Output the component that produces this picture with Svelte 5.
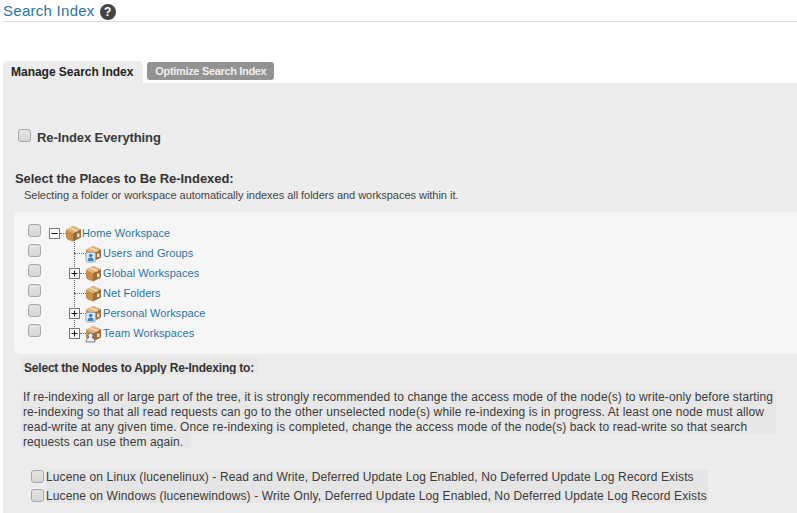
<script>
  const rows = [
    { label: 'Home Workspace', toggle: 'minus', depth: 0, badge: '' },
    { label: 'Users and Groups', toggle: '', depth: 1, badge: 'user' },
    { label: 'Global Workspaces', toggle: 'plus', depth: 1, badge: '' },
    { label: 'Net Folders', toggle: '', depth: 1, badge: '' },
    { label: 'Personal Workspace', toggle: 'plus', depth: 1, badge: 'user' },
    { label: 'Team Workspaces', toggle: 'plus', depth: 1, badge: 'team' }
  ];
  const nodes = [
    'Lucene on Linux (lucenelinux) - Read and Write, Deferred Update Log Enabled, No Deferred Update Log Record Exists',
    'Lucene on Windows (lucenewindows) - Write Only, Deferred Update Log Enabled, No Deferred Update Log Record Exists'
  ];
</script>

<div class="page">
  <header class="title">
    <span>Search Index</span>
    <span class="help">?</span>
  </header>

  <nav class="tabs">
    <span class="tab active">Manage Search Index</span>
    <span class="tab">Optimize Search Index</span>
  </nav>

  <main class="panel">
    <label class="everything"><input type="checkbox" /><span>Re-Index Everything</span></label>

    <h2>Select the Places to Be Re-Indexed:</h2>
    <p class="hint">Selecting a folder or workspace automatically indexes all folders and workspaces within it.</p>

    <section class="tree">
      <div class="checks">
        {#each rows as r}<input type="checkbox" aria-label={r.label} />{/each}
      </div>
      <div class="rows">
        {#each rows as r}
          <div class="row" class:child={r.depth === 1}>
            {#if r.depth === 1}
              <i class="vline"></i>
            {/if}
            {#if r.toggle}
              <svg class="toggle" width="11" height="11" viewBox="0 0 11 11">
                <rect x=".5" y=".5" width="10" height="10" fill="#fff" stroke="#777" />
                <path d="M2.500 5.500h6" stroke="#111" />
                {#if r.toggle === 'plus'}<path d="M5.500 2.500v6" stroke="#111" />{/if}
              </svg>
              <i class="dots short"></i>
            {:else}
              <i class="dots long"></i>
            {/if}
            <svg class="box" width="20" height="20" viewBox="0 0 20 20">
              <path d="M3 6.500 10 10V18.500L4.500 16.500 3 14.500Z" fill="#c98d4a" />
              <path d="M10 10 18 6V14.500L10 18.500Z" fill="#9f6d39" />
              <path d="M3 6.500 10 2.800 18 6 10 10Z" fill="#e0b27a" />
              <path d="M6.500 4.600 14.500 8" stroke="#f3dcb6" stroke-width="1.500" />
              <rect x="14" y="10.500" width="2.500" height="3.500" fill="#e8dcc8" />
              {#if r.badge === 'user'}
                <rect x="3" y="9.500" width="9.500" height="9.500" rx="1.500" fill="#dfe7f0" stroke="#9aa9ba" />
                <circle cx="7.700" cy="12.500" r="1.800" fill="#2f87d0" />
                <path d="M4.600 18c0-2.800 1.300-3.400 3.100-3.400s3.100.6 3.100 3.400Z" fill="#2f87d0" />
              {:else if r.badge === 'team'}
                <path d="M3 19c.2-3 1.500-4.200 3-4.600a2.400 2.400 0 1 1 3 0c1.500.4 2.800 1.600 3 4.600Z" fill="#e8edf2" stroke="#667" stroke-width=".8" />
              {/if}
            </svg>
            <span class="label">{r.label}</span>
          </div>
        {/each}
      </div>
    </section>

    <section class="nodes">
      <div class="nodes-clip"><h3>Select the Nodes to Apply Re-Indexing to:</h3></div>
      <p class="note">If re-indexing all or large part of the tree, it is strongly recommended to change the access mode of the node(s) to write-only before starting re-indexing so that all read requests can go to the other unselected node(s) while re-indexing is in progress. At least one node must allow read-write at any given time. Once re-indexing is completed, change the access mode of the node(s) back to read-write so that search requests can use them again.</p>
      <div class="node-list">
        {#each nodes as n}
          <label class="node"><input type="checkbox" /><span>{n}</span></label>
        {/each}
      </div>
    </section>
  </main>
</div>

<style>
  :global(body) { margin: 0; background: #fff; }
  .page {
    width: 797px;
    height: 513px;
    overflow: hidden;
    font-family: "Liberation Sans", Arial, sans-serif;
    font-size: 12px;
    color: #333;
    box-sizing: border-box;
    padding-left: 3px;
  }
  .title {
    display: flex;
    align-items: center;
    gap: 5px;
    height: 21px;
    border-bottom: 1px solid #ddd;
    font-size: 15px;
    letter-spacing: .27px;
    color: #2b75a5;
  }
  .help {
    width: 16px;
    height: 16px;
    border-radius: 50%;
    background: #444;
    color: #fff;
    font-size: 12px;
    font-weight: 700;
    letter-spacing: 0;
    line-height: 16px;
    text-align: center;
    margin-top: 2px;
  }
  .tabs {
    display: flex;
    align-items: flex-end;
    gap: 4px;
    height: 22px;
    margin-top: 39px;
  }
  .tab {
    display: flex;
    align-items: center;
    height: 18px;
    margin-bottom: 3px;
    padding: 0 8px;
    background: #939393;
    color: #eee;
    border-radius: 3px;
    font-size: 11px;
    font-weight: 700;
    letter-spacing: -.33px;
  }
  .tab.active {
    height: 22px;
    margin-bottom: 0;
    padding-right: 10px;
    background: #ececec;
    color: #222;
    border-radius: 4px 4px 0 0;
    font-size: 12px;
    letter-spacing: -.02px;
  }
  .panel {
    background: #ececec;
    height: 430px;
    padding-top: 45px;
    box-sizing: border-box;
  }
  input[type="checkbox"] {
    appearance: none;
    display: block;
    flex: none;
    width: 11px;
    height: 11px;
    margin: 0;
    background: linear-gradient(#e4e4e4, #d6d6d6);
    border: 1px solid #a8a8a8;
    border-radius: 3px;
    box-sizing: content-box;
  }
  .everything {
    display: flex;
    align-items: center;
    gap: 6px;
    margin-left: 15px;
    font-size: 13px;
    font-weight: 700;
    letter-spacing: -.1px;
    color: #3a3a3a;
    height: 18px;
  }
  .everything input { margin-bottom: 3px; }
  h2 {
    margin: 25px 0 0 12px;
    font-size: 13px;
    line-height: 16px;
    letter-spacing: -.05px;
    color: #333;
  }
  .hint {
    margin: 2px 0 0 21px;
    font-size: 11px;
    line-height: 13px;
    letter-spacing: -.03px;
    color: #444;
  }
  .tree {
    display: flex;
    margin: 10px 0 0 11px;
    height: 142px;
    background: #f6f6f6;
    border-radius: 5px 0 0 5px;
    box-sizing: border-box;
    padding-top: 12px;
  }
  .checks {
    display: flex;
    flex-direction: column;
    gap: 7px;
    margin-left: 14px;
    width: 19px;
  }
  .rows { margin: -1px 0 0 -1px; }
  .row {
    position: relative;
    display: flex;
    align-items: center;
    height: 20px;
    font-size: 11px;
    letter-spacing: .07px;
    color: #2b75a5;
  }
  .row .toggle { margin-left: 3px; flex: none; }
  .row.child .toggle { margin-left: 23px; position: relative; z-index: 1; }
  .dots { display: block; height: 0; border-top: 1px dotted #666; flex: none; }
  .dots.short { width: 6px; }
  .dots.long { width: 12px; margin-left: 28px; }
  .vline {
    position: absolute;
    left: 28px;
    top: -10px;
    height: 20px;
    border-left: 1px dotted #666;
  }
  .box { flex: none; margin-left: -3px; }
  .label { white-space: nowrap; }
  .row:not(.child) .label { margin-left: -1px; }
  .nodes { padding-left: 18px; }
  .nodes-clip {
    width: fit-content;
    height: 16px;
    margin-top: 4px;
    overflow: hidden;
    background: #e7e7e7;
  }
  h3 {
    margin: 0;
    padding: 3px 4px 0 3px;
    font-size: 12px;
    line-height: 15px;
    letter-spacing: -.2px;
    color: #333;
  }
  .note {
    margin: 16px 0 0;
    width: 755px;
    height: 58px;
    overflow: hidden;
    background:
      linear-gradient(#e7e7e7, #e7e7e7) left top / 100% 44px no-repeat,
      linear-gradient(#e7e7e7, #e7e7e7) left bottom / 170px 14px no-repeat;
    font-size: 12px;
    line-height: 15px;
    padding-left: 2px;
    box-sizing: border-box;
    color: #3b3b3b;
    letter-spacing: .1px;
  }
  .node-list { margin: 22px 0 0 10px; }
  .node {
    display: flex;
    gap: 2px;
  }
  .node span {
    width: 662px;
    flex: none;
    background: #e5e5e5;
    line-height: 14px;
    white-space: nowrap;
    letter-spacing: .12px;
    color: #3b3b3b;
    padding-bottom: 5px;
  }
  .node:last-child span { padding-bottom: 0; }
</style>
